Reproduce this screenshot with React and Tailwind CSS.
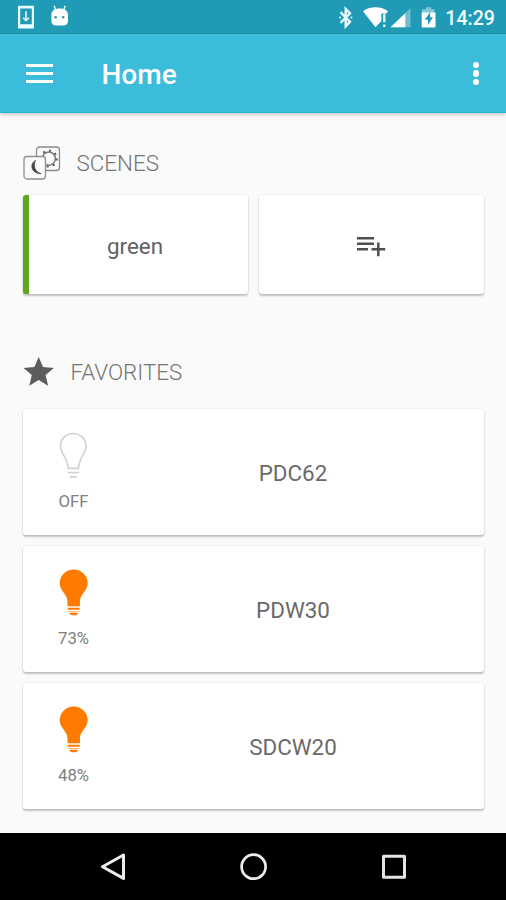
const lights = [
  { name: 'PDC62', level: 'OFF', on: false },
  { name: 'PDW30', level: '73%', on: true },
  { name: 'SDCW20', level: '48%', on: true },
];

const cardShadow = 'shadow-[0_2px_2px_rgba(0,0,0,0.22),0_0_2px_rgba(0,0,0,0.12)]';

function StatusBar() {
  return (
    <div className="flex h-[34px] shrink-0 items-start border-b border-[#1c8ba4] bg-[#219ab5] pt-1 pl-[17px] pr-[11px]">
      <svg className="h-[26px] w-[18px]" viewBox="0 0 18 26" fill="none">
        <path fillRule="evenodd" fill="#e8fbff" d="M1.600 1.700h14.800a.6.6 0 0 1 .6.6v21.400a.8.8 0 0 1-.8.8H1.800a.8.8 0 0 1-.8-.8V2.300a.6.6 0 0 1 .6-.6ZM3.200 4.400v15.800h11.600V4.400Z" />
        <path d="M9 7.200v9M6.200 13.800 9 16.600l2.800-2.800" stroke="#e8fbff" strokeWidth="1.600" />
      </svg>
      <svg className="ml-[15px] h-[26px] w-[20px]" viewBox="0 0 20 26">
        <path d="M4.300 2.300 5.600 6M15 2.300 13.700 6" stroke="#e8fbff" strokeWidth="1.500" strokeLinecap="round" />
        <path fill="#fff" d="M1.400 11C1.400 7.200 4.200 4.600 9.700 4.600s8.300 2.600 8.300 6.400v6c0 3-1.700 4.400-4.400 4.400H5.800c-2.700 0-4.400-1.400-4.400-4.400Z" />
        <circle cx="5.600" cy="13.300" r="1.200" fill="#219ab5" />
        <circle cx="13.200" cy="13.300" r="1.200" fill="#219ab5" />
      </svg>
      <div className="flex-1" />
      <svg className="h-[26px] w-[104px]" viewBox="0 0 104 26" fill="none">
        <path d="m4.500 8.200 9.500 9.600-4.300 4.400V5L14 9.300l-9.500 9.600" stroke="#e8fbff" strokeWidth="2.400" />
        <path d="M4 13.500h.1M15.400 13.500h.1" stroke="#e8fbff" strokeWidth="1.900" strokeLinecap="round" />
        <path d="M27 7.300c6.500-5.400 18.500-5.400 25 0l-1.600 2.300h-5v7.500l-5.900 6.200Z" fill="#fff" />
        <path d="M48.300 10v8.200M48.300 20.500v2.600" stroke="#e8fbff" strokeWidth="2.300" />
        <path d="M74.500 4v19.200H54.500Z" fill="#6bbfd0" />
        <path d="M69.300 9.200v14H54.500Z" fill="#fff" />
        <path d="M88 5.200h2V3.300h5.200v1.900h3.300v5.400H86V5.200Z" fill="#83c8d8" />
        <path d="M85.700 8.600h13.800v14a.9.9 0 0 1-.9.9H86.600a.9.9 0 0 1-.9-.9Z" fill="#fff" />
        <path d="m94.100 8-5.300 7.800h3.200v5.200l5-7.700h-2.900Z" fill="#219ab5" />
      </svg>
      <span className="ml-[5px] mt-[2.500px] text-[19.600px] leading-6 font-medium text-[#f2fdff]">14:29</span>
    </div>
  );
}

function AppBar() {
  return (
    <header className="relative flex h-[79px] shrink-0 items-center border-b border-[#25b3d6] bg-[#3cbcdb] pl-[26px] pr-[22px] text-white shadow-[0_2px_3px_rgba(0,0,0,0.18)]">
      <div className="flex w-[27px] flex-col gap-[5px] pt-px">
        <div className="h-[3px] bg-white" />
        <div className="h-[3px] bg-white" />
        <div className="h-[3px] bg-white" />
      </div>
      <h1 className="ml-[48.500px] flex-1 pt-[4px] text-[28px] leading-8 font-medium">Home</h1>
      <div className="flex w-4 flex-col items-center gap-[2px] pt-[1px]">
        <div className="size-[6.400px] rounded-full bg-white" />
        <div className="size-[6.400px] rounded-full bg-white" />
        <div className="size-[6.400px] rounded-full bg-white" />
      </div>
    </header>
  );
}

function ScenesIcon() {
  return (
    <svg className="h-[34px] w-[38px]" viewBox="0 0 38 34" fill="none">
      <rect x="13.500" y="1" width="23" height="23.500" rx="3" stroke="#8a8a8a" strokeWidth="1.300" />
      <circle cx="25.800" cy="12.600" r="6.600" stroke="#777" strokeWidth="1.500" />
      <circle cx="25.800" cy="12.600" r="8" stroke="#555" strokeWidth="2" strokeDasharray="2 4.283" />
      <rect x="1" y="10.500" width="21.500" height="22.500" rx="3" fill="#fafafa" stroke="#8f8f8f" strokeWidth="1.300" />
      <path d="M12.500 14.500C6.800 17.500 7.300 27 18 27.800 12 25.800 9.800 20 12.500 14.500Z" fill="#444" stroke="#444" strokeWidth=".8" />
    </svg>
  );
}

function Bulb({ on }) {
  if (on) {
    return (
      <svg className="h-12 w-[30px]" viewBox="0 0 30 48" fill="#ff7b00">
        <path d="M14.700 .5A14 14 0 0 0 .7 14.500C.7 22 8.500 24.500 8.500 33v4.300h12.400V33c0-8.500 7.800-11 7.800-18.500A14 14 0 0 0 14.700 .5Z" />
        <path d="M8.700 38.700h12v2H8.700ZM8.700 42h12v.6H8.700ZM10.200 43.800h9c-.6 1.700-1.500 2.500-2.800 2.500h-3.400c-1.300 0-2.200-.8-2.800-2.500Z" />
      </svg>
    );
  }
  return (
    <svg className="h-12 w-[30px]" viewBox="0 0 30 48" fill="none" stroke="#d2d2d2" strokeWidth="1.700">
      <path d="M14.200 1.500A12.700 12.700 0 0 0 1.500 14.200C1.500 21.300 9 26.800 9.200 36.300h10.200C19.600 26.800 27 21.300 27 14.200A12.700 12.700 0 0 0 14.200 1.500Z" />
      <path d="M8.700 40.500h11.500M10.700 44.800h7.500" />
    </svg>
  );
}

function LightCard({ name, level, on }) {
  return (
    <div className={`flex h-[126px] items-center rounded-[3px] bg-white ${cardShadow}`}>
      <div className="flex h-full w-[102px] flex-col items-center pt-[23px]">
        <Bulb on={on} />
        <span className="mt-[11.500px] text-[16.700px] leading-5 text-[#808080]">{level}</span>
      </div>
      <span className="flex-1 pt-px pr-[22px] text-center text-[22.400px] leading-7 text-[#6a6a6a]">{name}</span>
    </div>
  );
}

function NavBar() {
  return (
    <nav className="flex h-[67px] shrink-0 items-center justify-center gap-[112px] bg-black">
      <svg className="size-7" viewBox="0 0 28 28" fill="none" stroke="#ececec" strokeWidth="3" strokeLinejoin="round">
        <path d="M24.500 2v23.400L3.500 13.700Z" />
      </svg>
      <svg className="size-7" viewBox="0 0 28 28" fill="none" stroke="#ececec" strokeWidth="2.700">
        <circle cx="14.600" cy="13.700" r="12" />
      </svg>
      <svg className="size-7" viewBox="0 0 28 28" fill="none" stroke="#e4e4e4" strokeWidth="3" strokeLinejoin="round">
        <rect x="4.500" y="3.200" width="21" height="21" />
      </svg>
    </nav>
  );
}

export default function App() {
  return (
    <div className="flex h-[900px] w-[506px] flex-col overflow-hidden bg-[#fafafa] font-['Roboto',sans-serif]">
      <StatusBar />
      <AppBar />
      <main className="flex-1 px-[22.500px]">
        <div className="mt-[33px] flex h-[34px] items-center">
          <ScenesIcon />
          <h2 className="ml-4 text-[22.400px] leading-7 font-light text-[#757575]">SCENES</h2>
        </div>
        <div className="mt-[15px] grid h-[99px] grid-cols-2 gap-[11px]">
          <div className={`flex items-center justify-center overflow-hidden rounded-[3px] border-l-[6px] border-[#5ea91b] bg-white pt-[3px] pr-[6px] text-[22.400px] leading-7 text-[#626262] ${cardShadow}`}>
            green
          </div>
          <div className={`flex items-center justify-center rounded-[3px] bg-white ${cardShadow}`}>
            <svg className="h-6 w-[30px]" viewBox="0 0 30 24" fill="none" stroke="#505050" strokeWidth="2.500">
              <path d="M1 5.200h17M1 10.700h17M1 16.300h11M15.500 16.300H29.200M22.300 9.500v13.700" />
            </svg>
          </div>
        </div>
        <div className="mt-[62px] flex h-8 items-center">
          <svg className="size-8" viewBox="0 0 32 32" fill="#5c5c5c">
            <path d="m15.700 1 4.300 10 10.900.9-8.300 7.200 2.500 10.700-9.400-5.700-9.400 5.700 2.500-10.700L.5 11.900l10.900-.9Z" />
          </svg>
          <h2 className="ml-4 text-[22.400px] leading-7 font-light text-[#757575]">FAVORITES</h2>
        </div>
        <div className="mt-[21px] flex flex-col gap-[11px]">
          {lights.map((light) => (
            <LightCard key={light.name} {...light} />
          ))}
        </div>
      </main>
      <NavBar />
    </div>
  );
}
